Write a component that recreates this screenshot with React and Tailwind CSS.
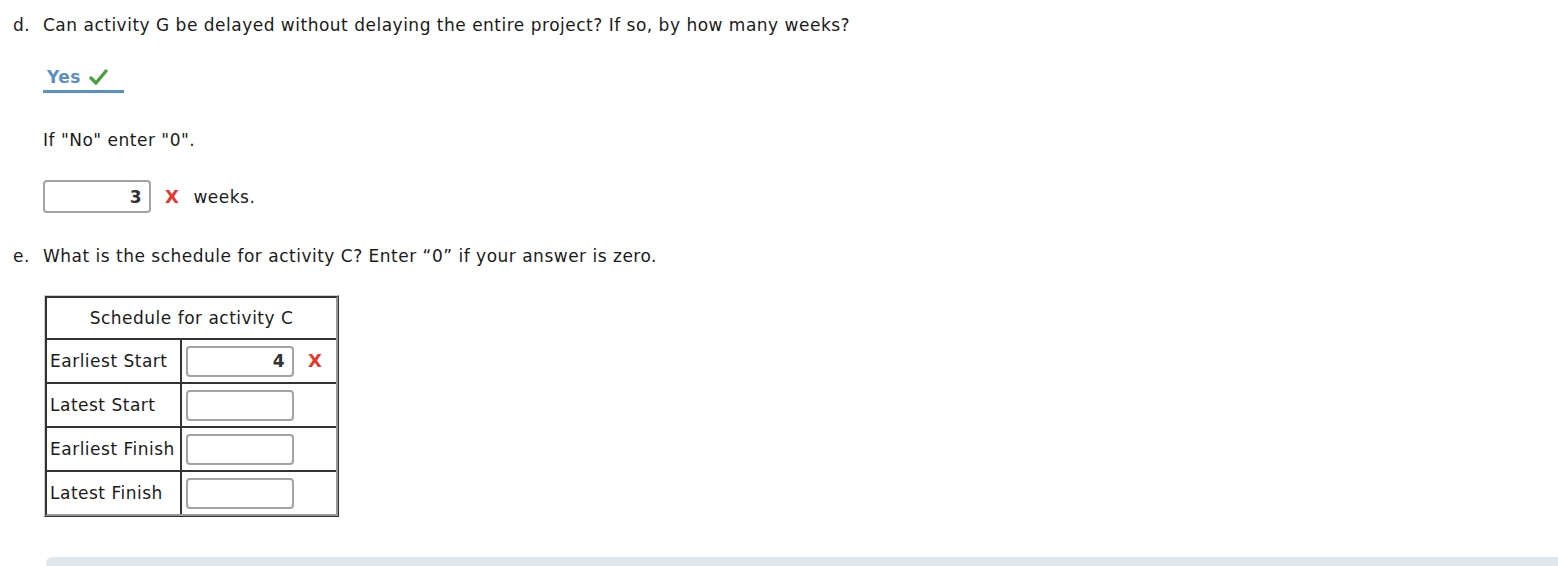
import React from 'react';

// caja de respuesta con el numero alineado a la derecha
function Caja({ valor, className = '' }) {
  return (
    <div className={`flex items-center justify-end rounded-[4px] border-2 border-[#a3a3a3] bg-white pr-[7px] font-bold text-[#333] ${className}`}>
      {valor}
    </div>
  );
}

function Cruz() {
  return <span className="font-bold text-[18px] leading-none text-[#e8352c]">X</span>;
}

const filas = [
  { nombre: 'Earliest Start', valor: '4', mal: true },
  { nombre: 'Latest Start' },
  { nombre: 'Earliest Finish' },
  { nombre: 'Latest Finish' },
];

export default function App() {
  return (
    <div className="relative min-h-[566px] bg-white text-[17px] leading-[20px] tracking-[0.5px] text-[#1a1a1a]" style={{ fontFamily: '"DejaVu Sans", Verdana, sans-serif' }}>
      <div className="pt-[15px]">
        {/* pregunta d */}
        <div className="flex">
          <span className="w-[43px] pl-[13px]">d.</span>
          <span>Can activity G be delayed without delaying the entire project? If so, by how many weeks?</span>
        </div>

        <div className="ml-[43px] mt-[32px] flex w-[81px] items-center gap-[8px] border-b-[3px] border-[#5b8fc7] pb-[3px] pl-[4px]">
          <span className="font-bold text-[#5b8fc7]">Yes</span>
          <svg width="19" height="17" viewBox="0 0 19 17">
            <path d="M2 9 L7 14 L17 2" fill="none" stroke="#4a9e3f" strokeWidth="3.4" strokeLinecap="round" strokeLinejoin="round" />
          </svg>
        </div>

        <div className="ml-[43px] mt-[37px]">If "No" enter "0".</div>

        <div className="ml-[43px] mt-[30px] flex items-center">
          <Caja valor="3" className="h-[33px] w-[108px]" />
          <span className="ml-[14px]"><Cruz /></span>
          <span className="ml-[14px]">weeks.</span>
        </div>

        {/* pregunta e */}
        <div className="mt-[33px] flex">
          <span className="w-[43px] pl-[13px]">e.</span>
          <span>What is the schedule for activity C? Enter “0” if your answer is zero.</span>
        </div>

        <div className="ml-[44px] mt-[29px] w-[295px] border border-[#b0b0b0] border-r-[#333] border-b-[#333] border-l-[#cfcfcf] border-t-[#cfcfcf]">
          <div className="border-2 border-[#333] border-r-[#999] border-b-[#999]">
            <div className="flex h-[42px] items-center justify-center border-b-2 border-[#333]">Schedule for activity C</div>
            {filas.map((f, i) => (
              <div key={f.nombre} className={`flex ${i < filas.length - 1 ? 'h-[44px] border-b-2 border-[#333]' : 'h-[42px]'}`}>
                <div className="flex w-[135px] items-center border-r-2 border-[#333] pl-[3px] whitespace-nowrap">{f.nombre}</div>
                <div className="flex flex-1 items-center pl-[4px]">
                  <Caja valor={f.valor} className="h-[31px] w-[108px]" />
                  {f.mal && <span className="ml-[14px]"><Cruz /></span>}
                </div>
              </div>
            ))}
          </div>
        </div>
      </div>

      <div className="absolute bottom-0 left-[46px] right-0 h-[9px] rounded-tl-[6px] bg-[#e1e6ea]" />
    </div>
  );
}
